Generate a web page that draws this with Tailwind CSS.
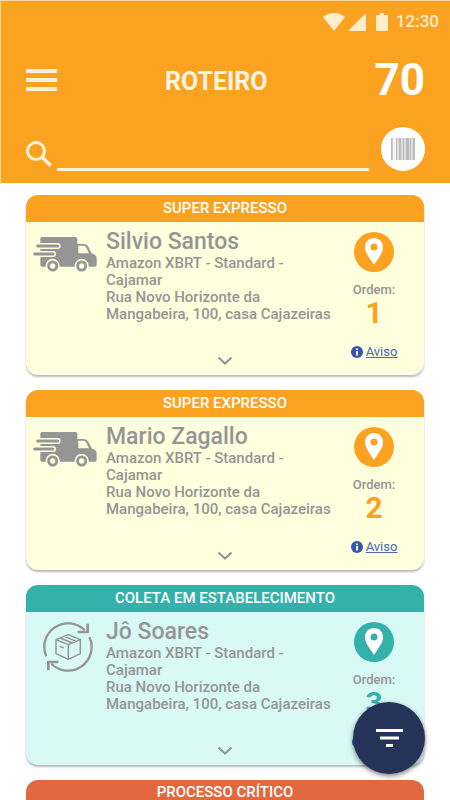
<!DOCTYPE html>
<html lang="pt-BR">
<head>
<meta charset="utf-8">
<meta name="viewport" content="width=device-width, initial-scale=1">
<title>Roteiro</title>
<script src="https://cdn.jsdelivr.net/npm/@tailwindcss/browser@4"></script>
</head>
<body class="relative h-screen overflow-hidden bg-white font-['Roboto','Liberation_Sans',sans-serif] text-[#959595]">
<svg class="hidden" aria-hidden="true">
  <symbol id="truck" viewBox="0 0 192 108">
    <path fill="currentColor" d="M22 8q0-5 5-5H128q5 0 5 5V92H27q-5 0-5-5Z"/>
    <path fill="currentColor" fill-rule="evenodd" d="M132 24H152Q162 24 166 32L176 52 186 57Q191 60 191 66V86Q191 92 185 92H132ZM136 29V52H168L160 35Q157 29 152 29Z"/>
    <g stroke-linecap="round" fill="none">
      <path stroke="var(--card)" stroke-width="18" d="M14 30H74M5 54H60"/>
      <path stroke="currentColor" stroke-width="9" d="M14 30H74M5 54H60"/>
    </g>
    <g fill="currentColor" stroke="var(--card)" stroke-width="5"><circle cx="59" cy="90" r="19"/><circle cx="146" cy="90" r="19"/></g>
    <g fill="var(--card)"><circle cx="59" cy="90" r="8"/><circle cx="146" cy="90" r="8"/></g>
  </symbol>
  <symbol id="pin" viewBox="0 0 40 40">
    <circle cx="20" cy="20" r="20" fill="currentColor"/>
    <path fill="#fff" fill-rule="evenodd" d="M20 6C14.800 6 11 10 11 15 11 21 15 25 20 33 25 25 29 21 29 15 29 10 25.200 6 20 6ZM20 11.500A3.500 3.500 0 1 1 20 18.500 3.500 3.500 0 0 1 20 11.500Z"/>
  </symbol>
  <symbol id="info" viewBox="0 0 12 12">
    <circle cx="6" cy="6" r="6" fill="#3455b4"/><path fill="#fff" d="M5 2.500h2v1.500H5zM5 5h2v4.500H5z"/>
  </symbol>
  <symbol id="chevron" viewBox="0 0 16 10">
    <path d="M1.500 1.500 8 7.500 14.500 1.500" fill="none" stroke="currentColor" stroke-width="2.200"/>
  </symbol>
  <symbol id="return" viewBox="0 0 150 156">
    <g fill="none" stroke="currentColor">
      <g stroke-width="7"><path d="M9.600 105.700A71 71 0 0 1 125.200 27.800"/><path d="M139.300 48A71 71 0 0 1 24.800 128.200"/></g>
      <g stroke-width="8"><path d="M134 8V33H104"/><path d="M16 148V123H46"/></g>
      <path stroke-width="4.500" stroke-linejoin="round" d="M76 41 112 56V98L76 115 39 98V56ZM39 56 76 71 112 56M76 71V115M51 51 88 66M64 46 100 61M50 76 62 81"/>
    </g>
  </symbol>
</svg>

<header class="border-t border-l border-[#fbd9a0] bg-[#fba321] px-[25px] text-white">
  <div class="-mr-4 flex h-[41px] items-center justify-end pr-[2px] text-[17px] text-[#ffedcc]">
    <svg class="h-[18px] w-[22px]" viewBox="0 0 22 18" fill="currentColor"><path d="M0 4Q11-4 22 4L11 18Z"/></svg>
    <svg class="ml-[3px] h-[18px] w-[18px]" viewBox="0 0 18 18" fill="currentColor"><path d="M18 0V18H0Z"/></svg>
    <svg class="ml-[10px] h-[18px] w-[12px]" viewBox="0 0 12 18" fill="currentColor"><path d="M4 0H8V2H11Q12 2 12 3V17Q12 18 11 18H1Q0 18 0 17V3Q0 2 1 2H4Z"/></svg>
    <span class="ml-2 font-medium">12:30</span>
  </div>
  <div class="flex items-center justify-between pt-3">
    <button type="button" aria-label="Menu" class="w-8">
      <svg class="h-[22px] w-[31px]" viewBox="0 0 31 22" fill="#fff2d8"><path d="M0 0H31V4H0ZM0 9H31V13H0ZM0 18H31V22H0Z"/></svg>
    </button>
    <h1 class="pt-1 text-[25px] leading-[48px] font-bold text-[#fff5e2]">ROTEIRO</h1>
    <span class="text-right text-[44px] leading-[52px] font-bold">70</span>
  </div>
  <div class="flex h-[77px] items-end pb-3">
    <label for="busca" class="mb-1">
      <svg class="block h-[26px] w-[26px]" viewBox="0 0 26 26" fill="none" stroke="#fff2d8"><circle cx="10" cy="10" r="8.500" stroke-width="3"/><path stroke-width="3.500" d="M16 16 24.500 24.500"/></svg>
    </label>
    <input id="busca" type="search" aria-label="Buscar" class="ml-[5px] h-9 min-w-0 flex-1 border-b-3 border-[#fff2d8] bg-transparent outline-none">
    <button type="button" aria-label="Ler código de barras" class="ml-3 flex size-11 items-center justify-center rounded-full bg-white">
      <svg class="h-[22px] w-[24px]" viewBox="0 0 24 22"><path fill="#dedede" d="M0 0H24V22H0Z"/><path fill="#f4f4f4" d="M2 0H5V22H2Z"/><path fill="#bbb" d="M0 0H1.500V22H0ZM5 0H6V22H5ZM8 0H10V22H8ZM12 0H13V22H12ZM15 0H18V22H15ZM19 0H20V22H19ZM22 0H24V22H22Z"/></svg>
    </button>
  </div>
</header>

<main class="flex flex-col gap-[15px] px-[26px] pt-3">
  <article class="overflow-hidden rounded-xl bg-[#feffdd] shadow-[0_2px_2px_#bbb] [--card:#feffdd]">
    <h2 class="bg-[#fba321] text-center text-[15px] leading-[27px] font-medium text-white">SUPER EXPRESSO</h2>
    <div class="grid">
      <div class="flex pb-[15px] [grid-area:1/1]">
        <div class="w-20 pt-[14px] pl-[7px]"><svg class="h-9 w-16"><use href="#truck"/></svg></div>
        <div class="flex-1 pt-[7px]">
          <h3 class="text-[23px] leading-[26px] font-medium">Silvio Santos</h3>
          <p class="text-[15px] leading-[17px] font-medium">Amazon XBRT - Standard -<br>Cajamar<br>Rua Novo Horizonte da<br>Mangabeira, 100, casa Cajazeiras</p>
        </div>
        <div class="mr-3 flex w-[76px] flex-col items-center pt-[10px]">
          <button type="button" aria-label="Ver no mapa" class="text-[#fba321]"><svg class="block size-10"><use href="#pin"/></svg></button>
          <span class="mt-[10px] text-[13px] leading-4 font-medium">Ordem:</span>
          <strong class="text-[30px] leading-[30px] text-[#fba321]">1</strong>
          <a href="#aviso" class="mt-4 flex items-center gap-[3px] text-[13px] leading-4 text-[#4a66ad] underline"><svg class="size-3"><use href="#info"/></svg>Aviso</a>
        </div>
      </div>
      <button type="button" aria-label="Expandir" class="mb-[9px] self-end justify-self-center [grid-area:1/1]"><svg class="block h-[10px] w-4"><use href="#chevron"/></svg></button>
    </div>
  </article>

  <article class="overflow-hidden rounded-xl bg-[#feffdd] shadow-[0_2px_2px_#bbb] [--card:#feffdd]">
    <h2 class="bg-[#fba321] text-center text-[15px] leading-[27px] font-medium text-white">SUPER EXPRESSO</h2>
    <div class="grid">
      <div class="flex pb-[15px] [grid-area:1/1]">
        <div class="w-20 pt-[14px] pl-[7px]"><svg class="h-9 w-16"><use href="#truck"/></svg></div>
        <div class="flex-1 pt-[7px]">
          <h3 class="text-[23px] leading-[26px] font-medium">Mario Zagallo</h3>
          <p class="text-[15px] leading-[17px] font-medium">Amazon XBRT - Standard -<br>Cajamar<br>Rua Novo Horizonte da<br>Mangabeira, 100, casa Cajazeiras</p>
        </div>
        <div class="mr-3 flex w-[76px] flex-col items-center pt-[10px]">
          <button type="button" aria-label="Ver no mapa" class="text-[#fba321]"><svg class="block size-10"><use href="#pin"/></svg></button>
          <span class="mt-[10px] text-[13px] leading-4 font-medium">Ordem:</span>
          <strong class="text-[30px] leading-[30px] text-[#fba321]">2</strong>
          <a href="#aviso" class="mt-4 flex items-center gap-[3px] text-[13px] leading-4 text-[#4a66ad] underline"><svg class="size-3"><use href="#info"/></svg>Aviso</a>
        </div>
      </div>
      <button type="button" aria-label="Expandir" class="mb-[9px] self-end justify-self-center [grid-area:1/1]"><svg class="block h-[10px] w-4"><use href="#chevron"/></svg></button>
    </div>
  </article>

  <article class="overflow-hidden rounded-xl bg-[#d8f9f6] shadow-[0_2px_2px_#bbb]">
    <h2 class="bg-[#33b1aa] text-center text-[15px] leading-[27px] font-medium text-white">COLETA EM ESTABELECIMENTO</h2>
    <div class="grid">
      <div class="flex pb-[15px] [grid-area:1/1]">
        <div class="w-20 pt-[9px] pl-[17px]"><svg class="h-[52px] w-[50px]"><use href="#return"/></svg></div>
        <div class="flex-1 pt-[7px]">
          <h3 class="text-[23px] leading-[26px] font-medium">Jô Soares</h3>
          <p class="text-[15px] leading-[17px] font-medium">Amazon XBRT - Standard -<br>Cajamar<br>Rua Novo Horizonte da<br>Mangabeira, 100, casa Cajazeiras</p>
        </div>
        <div class="mr-3 flex w-[76px] flex-col items-center pt-[10px]">
          <button type="button" aria-label="Ver no mapa" class="text-[#33b1aa]"><svg class="block size-10"><use href="#pin"/></svg></button>
          <span class="mt-[10px] text-[13px] leading-4 font-medium">Ordem:</span>
          <strong class="text-[30px] leading-[30px] text-[#33b1aa]">3</strong>
          <a href="#aviso" aria-label="Aviso" class="mt-4 flex h-4 w-11 items-center"><svg class="size-3"><use href="#info"/></svg></a>
        </div>
      </div>
      <button type="button" aria-label="Expandir" class="mb-[9px] self-end justify-self-center [grid-area:1/1]"><svg class="block h-[10px] w-4"><use href="#chevron"/></svg></button>
    </div>
  </article>

  <article class="overflow-hidden rounded-t-xl">
    <h2 class="bg-[#e2683f] text-center text-[15px] leading-[25px] font-medium text-white">PROCESSO CRÍTICO</h2>
  </article>
</main>

<button type="button" aria-label="Filtrar" class="absolute right-[25px] bottom-[26px] flex size-[72px] items-center justify-center rounded-full bg-[#253358] shadow-[0_2px_5px_rgba(0,0,0,0.5)]">
  <svg class="h-[18px] w-[27px]" viewBox="0 0 27 18" fill="#fff"><path d="M0 0H27V3H0ZM4 7.500H23V10.500H4ZM10 15H17V18H10Z"/></svg>
</button>
</body>
</html>
